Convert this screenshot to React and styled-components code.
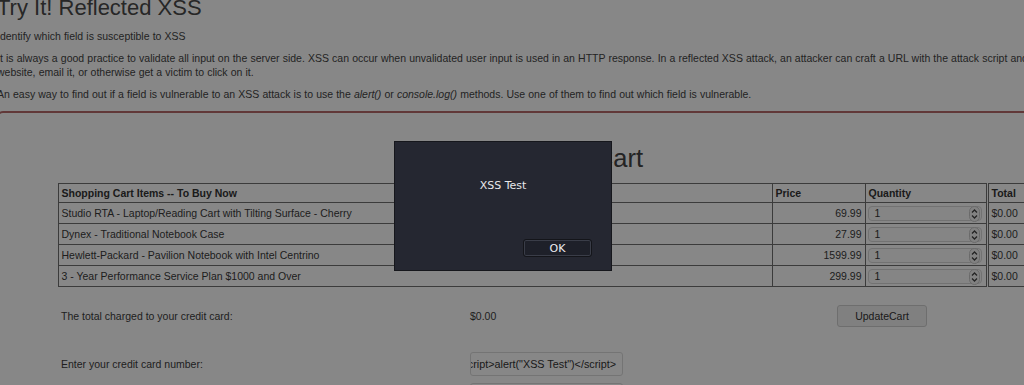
import React from 'react'
import styled, { createGlobalStyle } from 'styled-components'

const items = [
  { name: 'Studio RTA - Laptop/Reading Cart with Tilting Surface - Cherry', price: '69.99' },
  { name: 'Dynex - Traditional Notebook Case', price: '27.99' },
  { name: 'Hewlett-Packard - Pavilion Notebook with Intel Centrino', price: '1599.99' },
  { name: '3 - Year Performance Service Plan $1000 and Over', price: '299.99' },
]

const Spinner = () => (
  <SpinBox>
    <svg width="11" height="16" viewBox="0 0 11 16">
      <rect x="0.5" y="0.5" width="10" height="15" rx="5" fill="#f4f4f4" stroke="#c8c8c8" />
      <path d="M3 6.5 L5.5 4 L8 6.5" fill="none" stroke="#444" strokeWidth="1.3" />
      <path d="M3 9.5 L5.5 12 L8 9.5" fill="none" stroke="#444" strokeWidth="1.3" />
    </svg>
  </SpinBox>
)

const App = () => {
  return (
    <>
      <GlobalStyle />
      <Page>
        <Title>Try It! Reflected XSS</Title>
        <Text>Identify which field is susceptible to XSS</Text>
        <Text>
          It is always a good practice to validate all input on the server side. XSS can occur when unvalidated user input is used in an HTTP response. In a reflected XSS attack, an attacker can craft a URL with the attack script and post it to another website, email it, or otherwise get a victim to click on it.
        </Text>
        <Text>
          An easy way to find out if a field is vulnerable to an XSS attack is to use the <em>alert()</em> or <em>console.log()</em> methods. Use one of them to find out which field is vulnerable.
        </Text>
        <Fieldset>
          <CartTitle>Shopping Cart</CartTitle>
          <CartTable>
            <colgroup>
              <col style={{ width: 714 }} />
              <col style={{ width: 93 }} />
              <col style={{ width: 122 }} />
              <col style={{ width: 78 }} />
            </colgroup>
            <thead>
              <tr>
                <Th>Shopping Cart Items -- To Buy Now</Th>
                <Th>Price</Th>
                <Th>Quantity</Th>
                <Th $total>Total</Th>
              </tr>
            </thead>
            <tbody>
              {items.map(it => (
                <tr key={it.name}>
                  <Td>{it.name}</Td>
                  <Td $right>{it.price}</Td>
                  <Td $tight>
                    <QtyBox>
                      <span>1</span>
                      <Spinner />
                    </QtyBox>
                  </Td>
                  <Td $total>$0.00</Td>
                </tr>
              ))}
            </tbody>
          </CartTable>
          <FormTable>
            <FormRow $h={46}>
              <Cell>The total charged to your credit card:</Cell>
              <Cell>$0.00</Cell>
              <Cell>
                <Button>UpdateCart</Button>
              </Cell>
            </FormRow>
            <FormRow $h={39} $pad="13px 0 2px">
              <Cell>Enter your credit card number:</Cell>
              <Cell>
                <Field><span>{'<script>alert("XSS Test")</script>'}</span></Field>
              </Cell>
              <Cell />
            </FormRow>
            <FormRow $h={30} $pad="3px 0 0">
              <Cell>Enter your three digit access code:</Cell>
              <Cell>
                <Field><span>111</span></Field>
              </Cell>
              <Cell />
            </FormRow>
          </FormTable>
        </Fieldset>
      </Page>
      <Shade />
      <Dialog>
        <DialogText>XSS Test</DialogText>
        <DialogFoot>
          <OkButton>OK</OkButton>
        </DialogFoot>
      </Dialog>
    </>
  )
}

const GlobalStyle = createGlobalStyle`
html, body {
  margin: 0;
  padding: 0;
  background: #ffffff;
  overflow: hidden;
  width: 1024px;
  height: 385px;
}
body {
  font-family: "Liberation Sans", Arial, sans-serif;
  color: #3c3c3c;
}
`

const Page = styled.div`
width: 1129px;
margin: -5px 0 0 -3px;
`

const Title = styled.h2`
font-size: 22px;
line-height: 26px;
font-weight: normal;
color: #4a4a4a;
margin: 0;
`

const Text = styled.p`
font-size: 10.5px;
word-spacing: 0.2px;
line-height: 14px;
margin: 8px 0 0;
color: #444;
em {
  font-style: italic;
}
`

const Fieldset = styled.div`
margin-top: 10px;
border: 2px solid #b86a6a;
border-radius: 6px;
min-height: 400px;
`

const CartTitle = styled.h1`
font-size: 25.5px;
line-height: 30px;
font-weight: normal;
text-align: center;
color: #444;
margin: 30px 0 10px;
`

const CartTable = styled.table`
width: 1007px;
margin: 0 auto;
border-collapse: collapse;
table-layout: fixed;
font-size: 10.5px;
`

const Th = styled.th`
height: 18px;
padding: 0 3px;
text-align: left;
font-weight: bold;
color: #333;
border: 1px solid #707070;
border-left: ${p => (p.$total ? '3px double #707070' : '1px solid #707070')};
`

const Td = styled.td`
height: 20px;
padding: ${p => (p.$tight ? '0 2px' : '0 3px')};
text-align: ${p => (p.$right ? 'right' : 'left')};
color: #3a3a3a;
border: 1px solid #707070;
border-left: ${p => (p.$total ? '3px double #707070' : '1px solid #707070')};
white-space: nowrap;
`

const QtyBox = styled.div`
height: 15px;
width: 114px;
box-sizing: border-box;
border: 1px solid #d8d8d8;
border-radius: 4px;
background: #fcfcfc;
display: flex;
align-items: center;
justify-content: space-between;
padding: 0 1px 0 6px;
font-size: 10.5px;
color: #333;
`

const SpinBox = styled.span`
display: flex;
align-items: center;
margin-top: 1px;
`

const FormTable = styled.div`
width: 1007px;
margin: 6px auto 0;
font-size: 10.5px;
color: #3c3c3c;
`

const FormRow = styled.div`
display: grid;
grid-template-columns: 409px 367px 1fr;
box-sizing: border-box;
height: ${p => p.$h}px;
padding: ${p => p.$pad || '0'};
`

const Cell = styled.div`
display: flex;
align-items: center;
padding-left: 3px;
`

const Button = styled.button`
width: 90px;
height: 22px;
font-family: "Liberation Sans", Arial, sans-serif;
font-size: 10.5px;
color: #333;
background: #f2f2f2;
border: 1px solid #d0d0d0;
border-radius: 3px;
padding: 0;
`

const Field = styled.div`
width: 153px;
height: 24px;
box-sizing: border-box;
border: 1px solid #dcdcdc;
border-radius: 3px;
background: #fff;
display: flex;
align-items: center;
justify-content: flex-end;
overflow: hidden;
white-space: nowrap;
padding: 0 6px;
font-size: 10.8px;
color: #333;
span {
  flex-shrink: 0;
}
`

const Shade = styled.div`
position: fixed;
inset: 0;
background: rgba(0, 0, 0, 0.47);
`

const Dialog = styled.div`
position: fixed;
left: 394px;
top: 141px;
width: 218px;
height: 130px;
box-sizing: border-box;
background: #252731;
border: 1px solid #16171c;
display: flex;
flex-direction: column;
font-family: "DejaVu Sans", sans-serif;
`

const DialogText = styled.div`
margin-top: 37px;
text-align: center;
font-size: 11px;
line-height: 14px;
color: #e8e8ea;
`

const DialogFoot = styled.div`
margin-top: auto;
display: flex;
justify-content: flex-end;
padding: 0 19px 13px 0;
`

const OkButton = styled.button`
width: 69px;
height: 18px;
box-sizing: border-box;
background: #1e2029;
border: 1px solid #14151a;
box-shadow: inset 0 0 0 1px #3a3d48;
border-radius: 3px;
color: #eeeef0;
font-family: "DejaVu Sans", sans-serif;
font-size: 11px;
padding: 0;
`

export default App
